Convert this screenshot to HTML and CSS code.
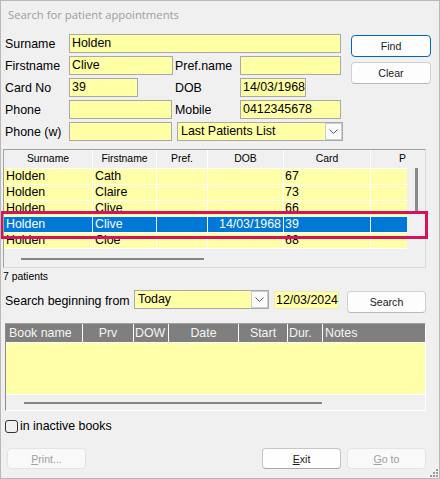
FILE: index.html
```html
<!DOCTYPE html>
<html>
<head>
<meta charset="utf-8">
<title>Search for patient appointments</title>
<link rel="stylesheet" href="styles.css">
</head>
<body>
<div class="win">
  <div class="title">Search for patient appointments</div>

  <div class="top">
    <div class="fields">
      <div class="row">
        <div class="lbl">Surname</div>
        <div class="inp w-sur">Holden</div>
      </div>
      <div class="row">
        <div class="lbl">Firstname</div>
        <div class="cell"><div class="inp w-first">Clive</div></div>
        <div class="lbl2">Pref.name</div>
        <div class="inp w-wide"></div>
      </div>
      <div class="row">
        <div class="lbl">Card No</div>
        <div class="cell"><div class="inp w-card">39</div></div>
        <div class="lbl2">DOB</div>
        <div class="inp w-dob">14/03/1968</div>
      </div>
      <div class="row">
        <div class="lbl">Phone</div>
        <div class="cell"><div class="inp w-phone"></div></div>
        <div class="lbl2">Mobile</div>
        <div class="inp w-wide">0412345678</div>
      </div>
      <div class="row">
        <div class="lbl">Phone (w)</div>
        <div class="cell"><div class="inp w-phone"></div></div>
        <div class="combo w-list">
          <span class="ctext">Last Patients List</span>
          <span class="arrow"><svg width="9" height="5" viewBox="0 0 9 5"><polyline points="0.5,0.5 4.5,4.5 8.5,0.5" fill="none" stroke="#5a5a5a" stroke-width="1"/></svg></span>
        </div>
      </div>
    </div>
    <div class="btns">
      <div class="btn find">Find</div>
      <div class="btn clear">Clear</div>
    </div>
  </div>

  <div class="list">
    <div class="grid">
      <div class="hdr">
        <div class="c c1">Surname</div>
        <div class="c c2">Firstname</div>
        <div class="c c3">Pref.</div>
        <div class="c c4">DOB</div>
        <div class="c c5">Card</div>
        <div class="c c6 hp">P</div>
      </div>
      <div class="r">
        <div class="c c1">Holden</div><div class="c c2">Cath</div><div class="c c3"></div><div class="c c4"></div><div class="c c5">67</div><div class="c c6"></div>
      </div>
      <div class="r">
        <div class="c c1">Holden</div><div class="c c2">Claire</div><div class="c c3"></div><div class="c c4"></div><div class="c c5">73</div><div class="c c6"></div>
      </div>
      <div class="r">
        <div class="c c1">Holden</div><div class="c c2">Clive</div><div class="c c3"></div><div class="c c4"></div><div class="c c5">66</div><div class="c c6"></div>
      </div>
      <div class="r sel">
        <div class="c c1">Holden</div><div class="c c2">Clive</div><div class="c c3"></div><div class="c c4">14/03/1968</div><div class="c c5">39</div><div class="c c6"></div>
      </div>
      <div class="r">
        <div class="c c1">Holden</div><div class="c c2">Cloe</div><div class="c c3"></div><div class="c c4"></div><div class="c c5">68</div><div class="c c6"></div>
      </div>
      <div class="hs"><div class="hthumb"></div></div>
    </div>
    <div class="vs"><div class="vthumb"></div></div>
  </div>

  <div class="count">7 patients</div>

  <div class="search">
    <div class="slbl">Search beginning from</div>
    <div class="combo w-today">
      <span class="ctext">Today</span>
      <span class="arrow"><svg width="9" height="5" viewBox="0 0 9 5"><polyline points="0.5,0.5 4.5,4.5 8.5,0.5" fill="none" stroke="#5a5a5a" stroke-width="1"/></svg></span>
    </div>
    <div class="date">12/03/2024</div>
    <div class="btn sbtn">Search</div>
  </div>

  <div class="books">
    <div class="bhdr">
      <div class="b b1">Book name</div>
      <div class="b b2">Prv</div>
      <div class="b b3">DOW</div>
      <div class="b b4">Date</div>
      <div class="b b5">Start</div>
      <div class="b b6">Dur.</div>
      <div class="b b7">Notes</div>
    </div>
    <div class="bbody"></div>
    <div class="bhs"><div class="bthumb"></div></div>
  </div>

  <div class="chkrow">
    <div class="chk"></div>
    <div class="chklbl">in inactive books</div>
  </div>

  <div class="bottom">
    <div class="btn dis print"><u>P</u>rint...</div>
    <div class="btn exit"><u>E</u>xit</div>
    <div class="btn dis goto"><u>G</u>o to</div>
  </div>

  <div class="mark"></div>
  <svg class="grip" width="8" height="8" viewBox="0 0 8 8">
    <rect x="6" y="0" width="2" height="2" fill="#9a9a9a"/>
    <rect x="3" y="3" width="2" height="2" fill="#9a9a9a"/>
    <rect x="6" y="3" width="2" height="2" fill="#9a9a9a"/>
    <rect x="0" y="6" width="2" height="2" fill="#9a9a9a"/>
    <rect x="3" y="6" width="2" height="2" fill="#9a9a9a"/>
    <rect x="6" y="6" width="2" height="2" fill="#9a9a9a"/>
  </svg>
</div>
</body>
</html>
```

FILE: styles.css
```css
* { box-sizing: border-box; }

body {
  margin: 0;
  background: #ffffff;
  font-family: "Liberation Sans", Arial, sans-serif;
  font-size: 12.4px;
  color: #000;
}

.win {
  position: relative;
  width: 440px;
  height: 479px;
  background: #f0f0f0;
  border: 1px solid #b9b9b9;
  overflow: hidden;
}

.title {
  height: 33px;
  line-height: 28px;
  padding-left: 7px;
  color: #9d9d9d;
  font-family: "Open Sans", "Liberation Sans", sans-serif;
  font-size: 11.3px;
}

/* ---------- top form ---------- */
.top { display: flex; }

.fields {
  width: 350px;
  display: flex;
  flex-direction: column;
  gap: 3px;
}

.row {
  display: flex;
  align-items: center;
  height: 19px;
}

.lbl {
  width: 68px;
  padding-left: 4px;
  white-space: nowrap;
}

.cell { width: 106px; }

.lbl2 {
  width: 65px;
  white-space: nowrap;
}

.inp {
  height: 19px;
  line-height: 17px;
  padding-left: 2px;
  background: #ffffa6;
  border: 1px solid #a9a9a9;
  white-space: nowrap;
  overflow: hidden;
}

.w-sur { width: 272px; }
.w-first { width: 104px; }
.w-card { width: 69px; }
.w-phone { width: 103px; }
.w-wide { width: 101px; }
.w-dob { width: 66px; }

.combo {
  display: flex;
  align-items: stretch;
  height: 19px;
  background: #ffffa6;
  border: 1px solid #a9a9a9;
}
.combo .ctext {
  flex: 1;
  line-height: 17px;
  padding-left: 3px;
  white-space: nowrap;
}
.combo .arrow {
  width: 17px;
  background: #fbfbfb;
  border: 1px solid #cdcdcd;
  display: flex;
  align-items: center;
  justify-content: center;
}
.w-list { width: 166px; margin-left: 2px; }

.btns {
  display: flex;
  flex-direction: column;
  gap: 5px;
  padding-top: 1px;
}

.btn {
  width: 80px;
  height: 22px;
  display: flex;
  align-items: center;
  justify-content: center;
  background: #fdfdfd;
  border: 1px solid #d0d0d0;
  border-bottom-color: #b8b8b8;
  border-radius: 4px;
  font-size: 10.6px;
  color: #1a1a1a;
}
.btn.find {
  border: 1px solid #0067c0;
}

/* ---------- patient list ---------- */
.list {
  margin-top: 8px;
  margin-left: 2px;
  width: 423px;
  height: 119px;
  border-top: 1px solid #a0a0a0;
  border-left: 1px solid #a0a0a0;
  border-right: 1px solid #dadada;
  border-bottom: 1px solid #dadada;
  display: flex;
  background: #f0f0f0;
}

.grid {
  width: 403px;
  overflow: hidden;
}

.hdr, .r {
  display: flex;
  width: 460px;
}

.hdr {
  height: 19px;
  background: #f0f0f0;
  border-bottom: 1px solid #ffffff;
  font-size: 10.4px;
}
.hdr .c {
  text-align: center;
  line-height: 18px;
  padding: 0;
}
.hdr .c.hp {
  text-align: left;
  padding-left: 28px;
}

.r {
  height: 16px;
  background: #ffffaa;
  border-bottom: 1px solid #ffffff;
}

.c {
  flex: none;
  border-right: 1px solid #ffffff;
  line-height: 15px;
  padding: 0 2px;
  white-space: nowrap;
  overflow: hidden;
}
.c1 { width: 89px; }
.c2 { width: 64px; }
.c3 { width: 51px; }
.c4 { width: 76px; text-align: right; }
.c5 { width: 87px; padding-left: 1px; }
.c6 { width: 90px; }

.r.sel {
  background: #0078d7;
  color: #ffffff;
}

.hs {
  height: 18px;
  padding-top: 9px;
  padding-left: 17px;
}
.hthumb {
  width: 183px;
  height: 2px;
  background: #858585;
}

.vs {
  flex: 1;
  padding-top: 18px;
  padding-left: 8px;
}
.vthumb {
  width: 3px;
  height: 43px;
  background: #8a8a8a;
}

.count {
  margin-top: 2px;
  padding-left: 2px;
  font-size: 10.4px;
  line-height: 14px;
  height: 14px;
}

/* ---------- search row ---------- */
.search {
  margin-top: 6px;
  display: flex;
  align-items: flex-start;
  height: 23px;
}
.slbl {
  width: 133px;
  padding-left: 4px;
  margin-top: 4px;
  line-height: 15px;
  white-space: nowrap;
}
.w-today { width: 135px; }
.date {
  margin-top: 1px;
  margin-left: 5px;
  width: 65px;
  height: 18px;
  line-height: 17px;
  padding-left: 1px;
  background: #ffffa6;
  border: 1px solid #ececc0;
  white-space: nowrap;
}
.btn.sbtn {
  margin-top: 1px;
  margin-left: 8px;
  width: 79px;
}

/* ---------- books grid ---------- */
.books {
  margin-top: 10px;
  margin-left: 4px;
  width: 421px;
  height: 88px;
  border-top: 1px solid #a0a0a0;
  border-left: 1px solid #8c8c8c;
  border-right: 1px solid #ffffff;
  border-bottom: 1px solid #ffffff;
  background: #f0f0f0;
}
.bhdr {
  display: flex;
  height: 19px;
  background: #7f7f7f;
  border-bottom: 1px solid #ffffff;
  color: #f4f4f4;
}
.b {
  flex: none;
  line-height: 18px;
  border-right: 1px solid #ffffff;
  white-space: nowrap;
  overflow: hidden;
}
.b1 { width: 77px; padding-left: 3px; }
.b2 { width: 51px; text-align: center; }
.b3 { width: 35px; padding-left: 1px; }
.b4 { width: 70px; text-align: center; }
.b5 { width: 49px; text-align: center; }
.b6 { width: 35px; padding-left: 1px; }
.b7 { flex: 1; padding-left: 2px; border-right: none; }

.bbody {
  height: 52px;
  background: #ffffaa;
  border-bottom: 1px solid #ffffff;
}
.bhs {
  height: 15px;
  padding-top: 7px;
  padding-left: 18px;
}
.bthumb {
  width: 298px;
  height: 2px;
  background: #858585;
}

/* ---------- checkbox ---------- */
.chkrow {
  margin-top: 9px;
  display: flex;
  align-items: center;
  height: 13px;
}
.chk {
  margin-left: 4px;
  width: 13px;
  height: 13px;
  border: 1px solid #333333;
  border-radius: 3px;
}
.chklbl {
  margin-left: 2px;
  line-height: 15px;
  white-space: nowrap;
}

/* ---------- bottom buttons ---------- */
.bottom {
  margin-top: 15px;
  display: flex;
  height: 21px;
}
.bottom .btn {
  width: 79px;
  height: 21px;
}
.btn.print { margin-left: 6px; }
.btn.exit {
  margin-left: auto;
  border-color: #c6c6c6;
  border-bottom-color: #a8a8a8;
  background: #fefefe;
}
.btn.goto { margin-left: 6px; margin-right: 13px; }
.btn.dis {
  background: #f9f9f9;
  border: 1px solid #e3e3e3;
  color: #a0a0a0;
}

/* ---------- overlays ---------- */
.mark {
  position: absolute;
  left: -1px;
  top: 210px;
  width: 428px;
  height: 28px;
  border: 3px solid #d4145a;
}

.grip {
  position: absolute;
  right: 1px;
  bottom: 1px;
}
```
